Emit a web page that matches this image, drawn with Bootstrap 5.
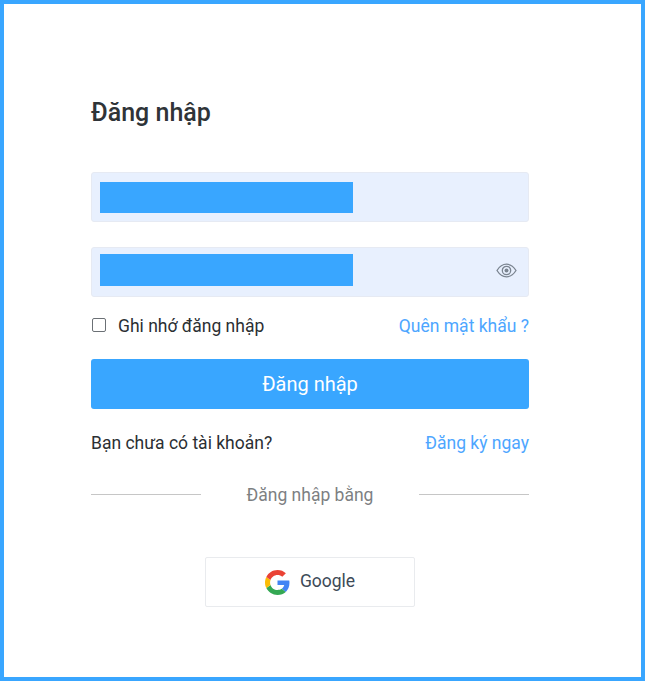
<!DOCTYPE html>
<html lang="vi">
<head>
    <meta charset="UTF-8">
    <meta name="viewport" content="width=device-width, initial-scale=1.0">
    <title>Đăng nhập</title>
    <link href="https://cdn.jsdelivr.net/npm/bootstrap@5.3.0/dist/css/bootstrap.min.css" rel="stylesheet">
    <style>
        html, body { height: 100%; }
        body { font-family: Roboto, "Liberation Sans", sans-serif; color: #2b2f33; background: #fff; }
        .login-frame { height: 681px; border: 4px solid #39a6ff; padding: 91px 112px 0 87px; overflow: hidden; }
        .login-title { font-size: 25px; line-height: 36px; font-weight: 500; color: #2f3438; margin-bottom: 41px; }
        .login-field { height: 50px; padding-left: 8px; background: #e8f0fe; border: 1px solid #e6eaf3; border-radius: 3px; }
        .login-field + .login-field { margin-top: 25px; }
        .masked-bar { width: 253px; background: #39a6ff; }
        .masked-user { height: 31px; }
        .masked-pass { height: 32px; margin-bottom: 4px; }
        .eye-icon { margin-right: 11px; margin-bottom: 4px; }
        .remember-row { height: 24px; margin-top: 17px; margin-bottom: 21px; font-size: 17.5px; line-height: 24px; }
        .remember-row .form-check-input { width: 14px; height: 14px; margin: -2px 12px 0 1px; border: 1px solid #6b7075; border-radius: 2px; float: none; }
        .login-link { color: #4da6ff; text-decoration: none; }
        .login-submit { height: 50px; font-size: 20px; color: #fff; background: #39a6ff; border: 0; border-radius: 3px; }
        .signup-row { height: 24px; margin-top: 22px; font-size: 17.5px; line-height: 24px; }
        .divider-row { height: 24px; margin-top: 28px; margin-bottom: 50px; font-size: 17.5px; line-height: 24px; color: #7d7f82; }
        .divider-line { width: 110px; height: 1px; margin-top: -1px; background: #c6c6c6; }
        .google-btn { width: 210px; height: 50px; background: #fff; border: 1px solid #e9ebee; border-radius: 2px; font-size: 17.5px; color: #3d4a57; }
        .google-label { margin-left: 2px; margin-bottom: 2px; }
    </style>
</head>
<body>
    <div class="login-frame">
        <h1 class="login-title">Đăng nhập</h1>

        <div class="login-field d-flex align-items-center">
            <div class="masked-bar masked-user"></div>
        </div>
        <div class="login-field d-flex align-items-center justify-content-between">
            <div class="masked-bar masked-pass"></div>
            <svg class="eye-icon" width="21" height="15" viewBox="0 0 21 15" fill="none" stroke="#7a8490">
                <path d="M1 7.500C3.500 3.500 6.800 1.200 10.500 1.200S17.500 3.500 20 7.500c-2.500 4-5.800 6.300-9.500 6.300S3.500 11.500 1 7.500z" stroke-width="1.300"/>
                <circle cx="10.500" cy="7.500" r="4.200" stroke-width="1.300"/>
                <circle cx="10.500" cy="7.500" r="2" fill="#7a8490" stroke="none"/>
            </svg>
        </div>

        <div class="remember-row d-flex align-items-center justify-content-between">
            <label class="d-flex align-items-center">
                <input type="checkbox" class="form-check-input">
                <span>Ghi nhớ đăng nhập</span>
            </label>
            <a href="#" class="login-link">Quên mật khẩu ?</a>
        </div>

        <button type="button" class="btn login-submit w-100 p-0">Đăng nhập</button>

        <div class="signup-row d-flex justify-content-between">
            <span>Bạn chưa có tài khoản?</span>
            <a href="#" class="login-link">Đăng ký ngay</a>
        </div>

        <div class="divider-row d-flex align-items-center justify-content-between">
            <div class="divider-line"></div>
            <span>Đăng nhập bằng</span>
            <div class="divider-line"></div>
        </div>

        <div class="d-flex justify-content-center">
            <button type="button" class="btn google-btn d-flex align-items-center justify-content-center gap-2 p-0">
                <svg width="25" height="25" viewBox="0 0 48 48">
                    <path fill="#4285F4" d="M46.980 24.550c0-1.570-.150-3.090-.380-4.550H24v9.020h12.940c-.580 2.960-2.260 5.480-4.780 7.180l7.730 6c4.510-4.180 7.090-10.360 7.090-17.650z"/>
                    <path fill="#34A853" d="M24 48c6.480 0 11.930-2.130 15.890-5.810l-7.730-6c-2.150 1.450-4.920 2.300-8.160 2.300-6.260 0-11.570-4.220-13.470-9.910l-7.980 6.190C6.510 42.620 14.620 48 24 48z"/>
                    <path fill="#FBBC05" d="M10.530 28.580c-.480-1.450-.760-2.990-.760-4.580s.270-3.130.760-4.580l-7.980-6.190C.920 16.460 0 20.120 0 24s.920 7.540 2.560 10.770l7.970-6.190z"/>
                    <path fill="#EA4335" d="M24 9.500c3.540 0 6.710 1.220 9.210 3.600l6.850-6.850C35.900 2.380 30.470 0 24 0 14.620 0 6.510 5.380 2.560 13.220l7.980 6.190C12.430 13.720 17.740 9.500 24 9.500z"/>
                </svg>
                <span class="google-label">Google</span>
            </button>
        </div>
    </div>

    <script src="https://cdn.jsdelivr.net/npm/bootstrap@5.3.0/dist/js/bootstrap.bundle.min.js"></script>
</body>
</html>
